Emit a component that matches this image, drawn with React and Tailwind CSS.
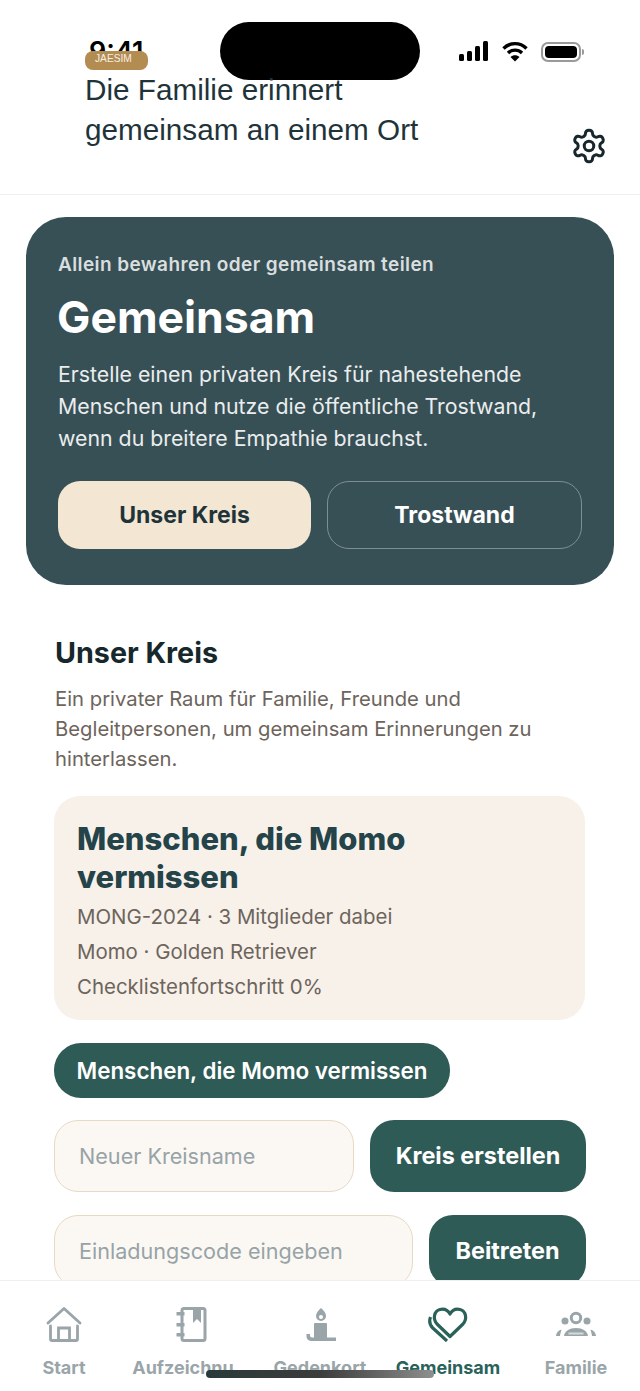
import React from "react";

const HomeIcon = () => (
  <svg width="36" height="36" viewBox="0 0 36 36" fill="none" stroke="#9AA5A9" strokeWidth="2.8">
    <path d="M2 17 18 2.500 34 17" strokeLinecap="round" strokeLinejoin="round" />
    <path d="M4.500 20v13a1.500 1.500 0 0 0 1.500 1.500h24a1.500 1.500 0 0 0 1.500-1.500V20" strokeLinecap="round" />
    <path d="M12.500 34V22h11v12" />
  </svg>
);

const BookIcon = () => (
  <svg width="32" height="36" viewBox="0 0 32 36" fill="#9AA5A9">
    <rect x="6" y="2.500" width="23" height="32" rx="2" fill="none" stroke="#9AA5A9" strokeWidth="3" />
    <path d="M17 2h8v15l-4-4-4 4z" />
    <rect x="0.500" y="6" width="8" height="3.500" />
    <rect x="0.500" y="17" width="8" height="3.500" />
    <rect x="0.500" y="27" width="8" height="3.500" />
  </svg>
);

const CandleIcon = () => (
  <svg width="32" height="36" viewBox="0 0 32 36" fill="#9AA5A9">
    <path fillRule="evenodd" d="M17 2c3 2.500 5 5.500 5 8a5 5 0 0 1-10 0c0-2.500 2-5.500 5-8zm0 7a2 2 0 1 0 0 4 2 2 0 0 0 0-4z" />
    <rect x="10" y="17" width="13" height="16" rx="1" />
    <path d="M2.500 28H6v1.500A2 2 0 0 0 8 31.500h24v3.500H7a5 5 0 0 1-4.500-5z" />
  </svg>
);

const HeartsIcon = () => (
  <svg width="42" height="36" viewBox="0 0 42 36" fill="none" stroke="#2A625A" strokeWidth="3.200">
    <path d="M23 30.500 10 18C5.500 13 7 5 13 3.500 17.500 2.500 21 4.500 23 8c2-3.500 5.500-5.500 10-4.500C39 5 40.500 13 36 18z" strokeLinejoin="round" />
    <path d="M3.500 11C2 15 2.800 19 5.800 22L20 35" />
  </svg>
);

const FamilyIcon = () => (
  <svg width="40" height="26" viewBox="0 0 40 26" fill="#9AA5A9">
    <circle cx="20" cy="7" r="4.700" fill="none" stroke="#9AA5A9" strokeWidth="3" />
    <circle cx="9" cy="10" r="3.500" />
    <circle cx="31" cy="10" r="3.500" />
    <path d="M8 25c.5-5 5.500-8 12-8s11.500 3 12 8z" />
    <path d="M12.500 22.500h15" stroke="#D5DADB" strokeWidth="2" />
    <path d="M0 25c.3-3 2-5.500 5.500-6.500C5 20.500 4.300 22.500 4 25zM40 25c-.3-3-2-5.500-5.500-6.500.5 2 1.200 4 1.500 6.500z" />
  </svg>
);

const GearIcon = () => (
  <svg width="38" height="38" viewBox="0 0 24 24" fill="none" stroke="#17282D" strokeWidth="1.900" strokeLinecap="round" strokeLinejoin="round">
    <path d="M12.220 2h-.44a2 2 0 0 0-2 2v.18a2 2 0 0 1-1 1.730l-.43.250a2 2 0 0 1-2 0l-.15-.08a2 2 0 0 0-2.730.730l-.22.380a2 2 0 0 0 .730 2.730l.15.100a2 2 0 0 1 1 1.720v.510a2 2 0 0 1-1 1.740l-.15.090a2 2 0 0 0-.730 2.730l.22.380a2 2 0 0 0 2.730.730l.15-.08a2 2 0 0 1 2 0l.43.250a2 2 0 0 1 1 1.730V20a2 2 0 0 0 2 2h.44a2 2 0 0 0 2-2v-.18a2 2 0 0 1 1-1.730l.43-.250a2 2 0 0 1 2 0l.15.080a2 2 0 0 0 2.730-.730l.22-.390a2 2 0 0 0-.730-2.730l-.15-.080a2 2 0 0 1-1-1.740v-.500a2 2 0 0 1 1-1.740l.15-.090a2 2 0 0 0 .730-2.730l-.22-.380a2 2 0 0 0-2.730-.730l-.15.080a2 2 0 0 1-2 0l-.43-.250a2 2 0 0 1-1-1.730V4a2 2 0 0 0-2-2z" />
    <circle cx="12" cy="12" r="3" />
  </svg>
);

const StatusBar = () => (
  <div className="absolute inset-x-0 top-0 z-0 h-[80px]">
    <span className="absolute left-[89px] top-[36px] text-[27px] leading-[32px] font-semibold text-black">9:41</span>
    <div className="absolute left-[220px] top-[22px] z-20 h-[58px] w-[200px] rounded-[29px] bg-black" />
    <div className="absolute left-[459px] top-[41px] flex items-end gap-[3px]">
      <span className="h-[7px] w-[5px] rounded-[1.500px] bg-black" />
      <span className="h-[10px] w-[5px] rounded-[1.500px] bg-black" />
      <span className="h-[15px] w-[5px] rounded-[1.500px] bg-black" />
      <span className="h-[20px] w-[5px] rounded-[1.500px] bg-black" />
    </div>
    <svg className="absolute left-[502px] top-[41px]" width="26" height="21" viewBox="0 0 26 21" fill="none" stroke="#000" strokeWidth="3.400">
      <path d="M1.500 7.500c6.500-6.500 16.500-6.500 23 0" />
      <path d="M6 12c4-3.800 10-3.800 14 0" />
      <path d="M13 20.500 8.500 16c2.600-2.200 6.400-2.200 9 0z" fill="#000" stroke="none" />
    </svg>
    <div className="absolute left-[541px] top-[42px] h-[20px] w-[40px] rounded-[7px] border-2 border-[#9a9a9a] p-[2px]">
      <div className="h-full w-full rounded-[4px] bg-black" />
    </div>
    <div className="absolute left-[582px] top-[49px] h-[6px] w-[2px] rounded-r-sm bg-[#9a9a9a]" />
  </div>
);

const Field = ({ text, btn, btnWidth }) => (
  <div className="flex gap-4">
    <div className="flex h-[72px] flex-1 items-center rounded-[24px] border border-[#E8D9C3] bg-[#FBF8F3] px-6 text-[21.600px] text-[#97A3A7]">{text}</div>
    <button className={`h-[72px] shrink-0 rounded-[24px] bg-[#2F5B57] text-[23.400px] font-bold text-white ${btnWidth}`}>{btn}</button>
  </div>
);

const Tab = ({ icon, label, active }) => (
  <div className="flex w-[128px] flex-col items-center">
    <div className="flex h-[40px] items-center justify-center">{icon}</div>
    <span className={`mt-[12px] text-center text-[18px] leading-[24px] font-bold ${active ? "text-[#2A625A]" : "text-[#9AA5A9]"}`}>{label}</span>
  </div>
);

export default function App() {
  return (
    <div className="relative flex h-[1391px] w-[640px] flex-col overflow-hidden bg-white font-['Inter',sans-serif]">
      <StatusBar />

      <header className="relative flex h-[195px] shrink-0 items-start justify-between border-b border-[#EFEFEF] pl-[85px] pr-[32px] pt-[51px]">
        <div className="font-['Liberation_Sans',sans-serif]">
          <div className="h-[19px] w-[63px] rounded-[8px] bg-[#B38C52] pl-[10px] text-[10.200px] leading-[15px] text-[#F7EFE3]">JAESIM</div>
          <h1 className="text-[29.700px] leading-[40px] text-[#1E343A]">
            Die Familie erinnert<br />gemeinsam an einem Ort
          </h1>
        </div>
        <div className="mt-[76px]"><GearIcon /></div>
      </header>

      <main className="min-h-0 flex-1 overflow-hidden">
        <section className="mx-[26px] mt-[22px] h-[368px] rounded-[40px] bg-[#375056] px-8 pt-[35px]">
          <p className="text-[19px] leading-[26px] font-semibold tracking-[0.400px] text-[#D9DEDF]">Allein bewahren oder gemeinsam teilen</p>
          <h2 className="mt-[13px] -ml-px text-[44.500px] leading-[52px] font-bold text-white">Gemeinsam</h2>
          <p className="mt-[15px] text-[21.300px] leading-[32px] text-[#EAEDED]">
            Erstelle einen privaten Kreis für nahestehende Menschen und nutze die öffentliche Trostwand, wenn du breitere Empathie brauchst.
          </p>
          <div className="mt-[27px] flex gap-4">
            <button className="h-[68px] flex-1 rounded-[22px] bg-[#F3E6D3] text-[23px] font-bold text-[#1E343A]">Unser Kreis</button>
            <button className="h-[68px] flex-1 rounded-[22px] border border-[#7D8F93] text-[23px] font-bold text-white">Trostwand</button>
          </div>
        </section>

        <section className="mt-[50px] px-[55px]">
          <h2 className="text-[28.700px] leading-[36px] font-bold text-[#17282D]">Unser Kreis</h2>
          <p className="mt-[13px] text-[20.250px] leading-[30px] text-[#6D645C]">
            Ein privater Raum für Familie, Freunde und Begleitpersonen, um gemeinsam Erinnerungen zu hinterlassen.
          </p>

          <div className="-ml-px mt-[22px] h-[224px] rounded-[26px] bg-[#F7F1EA] pl-[23px] pr-6 pt-[24px]">
            <h3 className="text-[31px] leading-[38px] font-extrabold text-[#24444A]">Menschen, die Momo vermissen</h3>
            <div className="mt-[3px] text-[20.450px] leading-[35px] text-[#6D645C]">
              <p>MONG-2024 · 3 Mitglieder dabei</p>
              <p>Momo · Golden Retriever</p>
              <p>Checklistenfortschritt 0%</p>
            </div>
          </div>

          <div className="-ml-px mt-[23px] flex w-[532px] flex-col gap-[23px]">
            <button className="-mb-px h-[55px] w-[396px] rounded-[27px] bg-[#2F5B57] text-[22.400px] font-semibold text-white">Menschen, die Momo vermissen</button>
            <Field text="Neuer Kreisname" btn="Kreis erstellen" btnWidth="w-[216px]" />
            <Field text="Einladungscode eingeben" btn="Beitreten" btnWidth="w-[157px]" />
          </div>
        </section>
      </main>

      <nav className="relative flex h-[111px] shrink-0 border-t border-[#EFEFEF] bg-white pt-[23px]">
        <Tab icon={<HomeIcon />} label="Start" />
        <Tab icon={<BookIcon />} label="Aufzeichnu..." />
        <Tab icon={<CandleIcon />} label="Gedenkort" />
        <Tab icon={<HeartsIcon />} label="Gemeinsam" active />
        <Tab icon={<FamilyIcon />} label="Familie" />
        <div className="absolute left-[206px] top-[89px] h-[8px] w-[228px] rounded-full bg-gradient-to-r from-[#2a3a3a] via-[#3c3c3c] to-[#8f8f8f]" />
      </nav>
    </div>
  );
}
